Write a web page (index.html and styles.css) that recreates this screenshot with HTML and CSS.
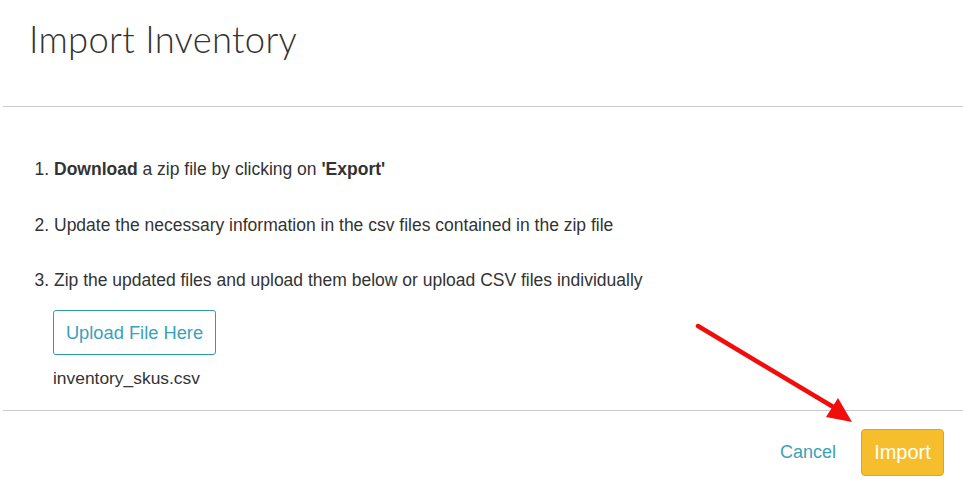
FILE: index.html
```html
<!DOCTYPE html>
<html>
<head>
<meta charset="utf-8">
<link rel="stylesheet" href="styles.css">
</head>
<body>
<div class="modal">
  <div class="modal-header">
    <h1 class="title">Import Inventory</h1>
  </div>
  <div class="modal-body">
    <ol class="steps">
      <li><b>Download</b> a zip file by clicking on <b>'Export'</b></li>
      <li>Update the necessary information in the csv files contained in the zip file</li>
      <li>Zip the updated files and upload them below or upload CSV files individually</li>
    </ol>
    <div class="upload">
      <button class="btn-upload">Upload File Here</button>
      <div class="filename">inventory_skus.csv</div>
    </div>
  </div>
  <div class="modal-footer">
    <a class="cancel">Cancel</a>
    <button class="btn-import">Import</button>
  </div>
  <svg class="arrow" width="963" height="497" viewBox="0 0 963 497">
    <line x1="701" y1="326" x2="838" y2="408" stroke="#f20d0d" stroke-width="4.5" stroke-linecap="round"/>
    <polygon points="855,422 829,417 841,398" fill="#f20d0d"/>
  </svg>
</div>
</body>
</html>
```
FILE: styles.css
```css
html, body {
  margin: 0;
  padding: 0;
  background: #fff;
}
body {
  font-family: "Liberation Sans", Arial, sans-serif;
  color: #333;
  width: 963px;
  height: 497px;
  overflow: hidden;
}
.modal {
  position: relative;
  padding-left: 3px;
}
.modal-header {
  height: 106px;
  border-bottom: 1px solid #ccc;
}
.title {
  margin: 0;
  padding: 17px 0 0 26px;
  font-family: Lato, sans-serif;
  font-weight: 300;
  font-size: 36.4px;
  line-height: 44px;
  color: #333;
  letter-spacing: 0.3px;
}
.modal-body {
  height: 303px;
  padding-left: 14px;
}
.steps {
  margin: 0;
  padding: 50px 0 0 37px;
  font-size: 17.5px;
  line-height: 24px;
}
.steps li {
  margin-bottom: 31.5px;
  padding-left: 0;
}
.steps li:last-child {
  margin-bottom: 0;
}
.upload {
  padding: 18px 0 0 36px;
}
.btn-upload {
  font-family: "Liberation Sans", Arial, sans-serif;
  font-size: 18.3px;
  color: #3aa2b8;
  background: #fff;
  border: 1px solid #2b9cb3;
  border-radius: 3px;
  width: 163px;
  height: 45px;
  padding: 0;
  cursor: pointer;
}
.filename {
  margin-top: 11px;
  font-size: 17.4px;
  line-height: 24px;
}
.modal-footer {
  border-top: 1px solid #ccc;
  height: 86px;
  display: flex;
  align-items: flex-start;
  justify-content: flex-end;
  padding-right: 19px;
  box-sizing: border-box;
}
.cancel {
  color: #3aa2b8;
  font-size: 18px;
  margin-top: 31px;
  margin-right: 25px;
  cursor: pointer;
}
.btn-import {
  margin-top: 18px;
  width: 83px;
  height: 47px;
  background: #f6be2c;
  border: 1px solid #ec9e23;
  border-radius: 4px;
  color: #fff;
  font-family: "Liberation Sans", Arial, sans-serif;
  font-size: 20px;
  padding: 0;
}
.arrow {
  position: absolute;
  left: -3px;
  top: 0;
  pointer-events: none;
}
```
